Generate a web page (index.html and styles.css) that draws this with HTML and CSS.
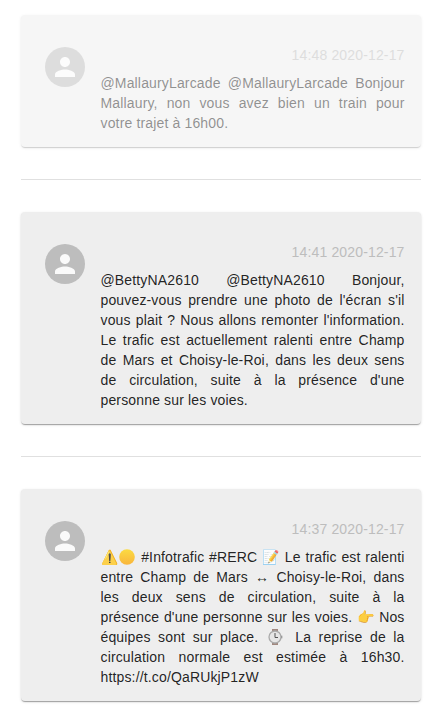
FILE: index.html
```html
<!DOCTYPE html>
<html lang="fr">
<head>
<meta charset="utf-8">
<title>Infos trafic</title>
<link rel="stylesheet" href="styles.css">
</head>
<body>
<main class="feed">
  <article class="card faded">
    <div class="avatar"><svg viewBox="0 0 24 24"><path d="M12 12c2.21 0 4-1.79 4-4s-1.79-4-4-4-4 1.79-4 4 1.79 4 4 4zm0 2c-2.67 0-8 1.34-8 4v2h16v-2c0-2.66-5.33-4-8-4z"/></svg></div>
    <div class="content"><time>14:48 2020-12-17</time><p>@MallauryLarcade @MallauryLarcade Bonjour Mallaury, non vous avez bien un train pour votre trajet à 16h00.</p></div>
  </article>
  <hr>
  <article class="card">
    <div class="avatar"><svg viewBox="0 0 24 24"><path d="M12 12c2.21 0 4-1.79 4-4s-1.79-4-4-4-4 1.79-4 4 1.79 4 4 4zm0 2c-2.67 0-8 1.34-8 4v2h16v-2c0-2.66-5.33-4-8-4z"/></svg></div>
    <div class="content"><time>14:41 2020-12-17</time><p>@BettyNA2610 @BettyNA2610 Bonjour, pouvez-vous prendre une photo de l'écran s'il vous plait ? Nous allons remonter l'information. Le trafic est actuellement ralenti entre Champ de Mars et Choisy-le-Roi, dans les deux sens de circulation, suite à la présence d'une personne sur les voies.</p></div>
  </article>
  <hr>
  <article class="card">
    <div class="avatar"><svg viewBox="0 0 24 24"><path d="M12 12c2.21 0 4-1.79 4-4s-1.79-4-4-4-4 1.79-4 4 1.79 4 4 4zm0 2c-2.67 0-8 1.34-8 4v2h16v-2c0-2.66-5.33-4-8-4z"/></svg></div>
    <div class="content"><time>14:37 2020-12-17</time><p>⚠️<svg class="emoji" viewBox="0 0 18 16"><defs><linearGradient id="sun" x1="0" y1="0" x2="0" y2="1"><stop offset="0" stop-color="#fbdb42"/><stop offset="1" stop-color="#f9b53c"/></linearGradient></defs><circle cx="9" cy="8" r="7.8" fill="url(#sun)"/></svg> #Infotrafic #RERC 📝 Le trafic est ralenti entre Champ de Mars ↔ Choisy-le-Roi, dans les deux sens de circulation, suite à la présence d'une personne sur les voies. 👉 Nos équipes sont sur place. <svg class="emoji watch" viewBox="0 0 18 16"><path fill="#a1887f" d="M6 0h6v2.5H6zM6 13.5h6V16H6z"/><rect x="14.5" y="6.7" width="1.8" height="2.6" fill="#888"/><circle cx="9" cy="8" r="6" fill="#e6e6e6" stroke="#aaa" stroke-width="1.3"/><path d="M9 4v4.5h3" fill="none" stroke="#555"/></svg> La reprise de la circulation normale est estimée à 16h30. https://t.co/QaRUkjP1zW</p></div>
  </article>
</main>
</body>
</html>
```
FILE: styles.css
```css
* { box-sizing: border-box; }
body { margin: 0; min-height: 721px; background: #fff; font-family: "Liberation Sans", Arial, sans-serif; }
.feed { width: 442px; padding: 15px 21px 0; }
.card {
  display: flex;
  gap: 15.5px;
  padding: 24px 16px 14px 24px;
  background: #eee;
  border-radius: 4px;
  box-shadow: 0 2px 1px -1px rgba(0,0,0,.2), 0 1px 1px 0 rgba(0,0,0,.14), 0 1px 3px 0 rgba(0,0,0,.12);
}
.faded { opacity: .5; }
.avatar {
  flex: none;
  display: flex;
  align-items: center;
  justify-content: center;
  width: 40px;
  height: 40px;
  margin-top: 8px;
  border-radius: 50%;
  background: #bdbdbd;
}
.avatar svg { width: 30px; height: 30px; fill: #fafafa; }
.content { flex: none; width: 304px; font-size: 14px; line-height: 20px; letter-spacing: .01071em; }
time { display: block; margin-top: 6px; text-align: right; color: #bdbdbd; }
p { margin: 8px 0 0; text-align: justify; color: rgba(0,0,0,.87); }
hr { height: 1px; margin: 32px 0; border: 0; background: rgba(0,0,0,.12); }
.emoji { width: 18px; height: 16px; vertical-align: -3px; }
.watch { margin-right: 4px; }
```
